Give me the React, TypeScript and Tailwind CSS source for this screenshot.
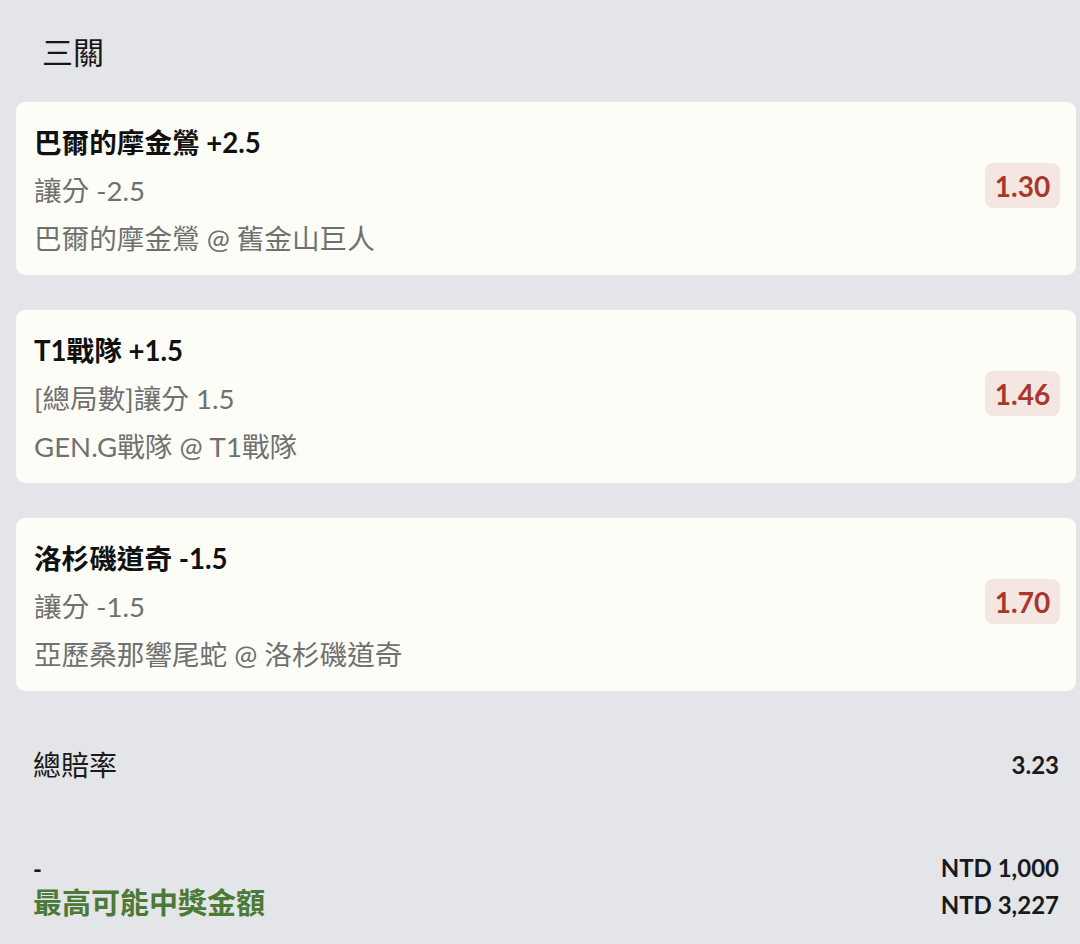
import React from 'react';

interface Leg {
    pick: string;
    market: string;
    match: string;
    odds: string;
}

const legs: Leg[] = [
    { pick: '巴爾的摩金鶯 +2.5', market: '讓分 -2.5', match: '巴爾的摩金鶯 @ 舊金山巨人', odds: '1.30' },
    { pick: 'T1戰隊 +1.5', market: '[總局數]讓分 1.5', match: 'GEN.G戰隊 @ T1戰隊', odds: '1.46' },
    { pick: '洛杉磯道奇 -1.5', market: '讓分 -1.5', match: '亞歷桑那響尾蛇 @ 洛杉磯道奇', odds: '1.70' },
];

const LegCard: React.FC<{ leg: Leg }> = ({ leg }) => {
    return (
        <div className="flex items-center justify-between rounded-[9px] bg-[#fdfdf8] pl-[18px] pr-[16px] pt-[17px] pb-[12px]">
            <div className="flex flex-col text-[27.6px] leading-[48px]">
                <p className="font-bold text-[#111111]">{leg.pick}</p>
                <p className="text-[#707070]">{leg.market}</p>
                <p className="text-[#707070]">{leg.match}</p>
            </div>
            <div className="mb-[11px] flex h-[45px] w-[75px] items-center justify-center rounded-[8px] bg-[#f4e6e1] text-[28px] font-bold text-[#a8372c]">
                {leg.odds}
            </div>
        </div>
    );
};

const App: React.FC = () => {
    return (
        <div
            className="min-h-[944px] w-full bg-[#e4e5e8] pl-[16px] pr-[4px]"
            style={{ fontFamily: 'Lato, "Noto Sans CJK TC", sans-serif' }}
        >
            <h1 className="pl-[26px] pt-[30px] pb-[28px] text-[31px] leading-[44px] text-[#161616]">三關</h1>

            <div className="flex flex-col gap-[35px]">
                {legs.map((leg) => (
                    <LegCard key={leg.odds} leg={leg} />
                ))}
            </div>

            <div className="mt-[52px] flex items-center justify-between pl-[17px] pr-[17px]">
                <span className="text-[28px] leading-[44px] text-[#1a1a1a]">總賠率</span>
                <span className="text-[24px] font-bold text-[#1a1a1a]">3.23</span>
            </div>

            <div className="mt-[62px] flex flex-col pl-[17px] pr-[17px]">
                <div className="flex items-center justify-between leading-[34px]">
                    <span className="pt-[3px] text-[24px] font-bold text-[#1a1a1a]">-</span>
                    <span className="text-[24px] font-bold text-[#1a1a1a]">NTD 1,000</span>
                </div>
                <div className="flex items-center justify-between leading-[34px]">
                    <span className="pb-[4px] text-[29px] font-bold text-[#4b7a36]">最高可能中獎金額</span>
                    <span className="text-[24px] font-bold text-[#1a1a1a]">NTD 3,227</span>
                </div>
            </div>
        </div>
    );
};

export default App;
